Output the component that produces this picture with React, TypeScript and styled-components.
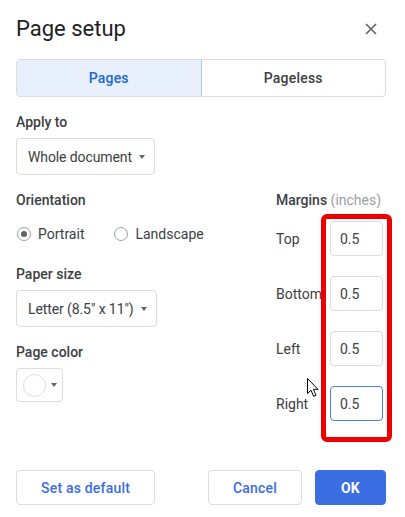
import styled, { createGlobalStyle, css } from 'styled-components';

const GlobalStyle = createGlobalStyle`
  html, body {
    margin: 0;
    padding: 0;
    background: #ffffff;
  }
  body {
    font-family: Roboto, "Liberation Sans", Arial, sans-serif;
    color: #3c4043;
    -webkit-font-smoothing: antialiased;
  }
  * {
    box-sizing: border-box;
  }
`;

const margins = [
  { label: 'Top', value: '0.5' },
  { label: 'Bottom', value: '0.5' },
  { label: 'Left', value: '0.5' },
  { label: 'Right', value: '0.5', focused: true },
];

function App() {
  return (
    <>
      <GlobalStyle />
      <Dialog>
        <Header>
          <Title>Page setup</Title>
          <CloseButton aria-label="Close">
            <svg width="12" height="12" viewBox="0 0 12 12">
              <path d="M1 1 L11 11 M11 1 L1 11" stroke="#5f6368" strokeWidth="1.6" />
            </svg>
          </CloseButton>
        </Header>

        <Tabs>
          <Tab $active>Pages</Tab>
          <Tab>Pageless</Tab>
        </Tabs>

        <Section>
          <Label>Apply to</Label>
          <Select>
            Whole document
            <Caret />
          </Select>
        </Section>

        <Columns>
          <LeftColumn>
            <Label>Orientation</Label>
            <RadioRow>
              <RadioOption>
                <Radio $checked />
                Portrait
              </RadioOption>
              <RadioOption>
                <Radio />
                Landscape
              </RadioOption>
            </RadioRow>

            <Label $top={20}>Paper size</Label>
            <Select>
              Letter (8.5" x 11")
              <Caret />
            </Select>

            <Label $top={15}>Page color</Label>
            <ColorButton>
              <Swatch />
              <Caret />
            </ColorButton>
          </LeftColumn>

          <RightColumn>
            <Label>
              Margins <Muted>(inches)</Muted>
            </Label>
            <MarginList>
              {margins.map((m) => (
                <MarginRow key={m.label}>
                  <MarginLabel>{m.label}</MarginLabel>
                  <MarginInput $focused={m.focused}>{m.value}</MarginInput>
                </MarginRow>
              ))}
            </MarginList>
            <Highlight />
            <Cursor width="13" height="20" viewBox="0 0 13 20">
              <path
                d="M0.5 0.5 L0.5 15.5 L4 12.2 L6.6 18.3 L9 17.3 L6.4 11.3 L11 11.3 Z"
                fill="#ffffff"
                stroke="#000000"
                strokeWidth="1"
                strokeLinejoin="round"
              />
            </Cursor>
          </RightColumn>
        </Columns>

        <Footer>
          <Button>Set as default</Button>
          <FooterRight>
            <Button>Cancel</Button>
            <Button $primary>OK</Button>
          </FooterRight>
        </Footer>
      </Dialog>
    </>
  );
}

const Dialog = styled.div`
  width: 405px;
  height: 517px;
  padding: 15px 19px 0 16px;
  display: flex;
  flex-direction: column;
  background: #ffffff;
`;

const Header = styled.div`
  display: flex;
  align-items: center;
  justify-content: space-between;
  height: 28px;
`;

const Title = styled.h1`
  margin: 0;
  font-size: 22px;
  line-height: 28px;
  font-weight: 400;
  color: #202124;
`;

const CloseButton = styled.button`
  display: flex;
  align-items: center;
  justify-content: center;
  width: 24px;
  height: 24px;
  margin-right: 3px;
  padding: 0;
  border: none;
  background: none;
`;

const Tabs = styled.div`
  display: flex;
  margin-top: 16px;
  height: 38px;
  border: 1px solid #dadce0;
  border-radius: 4px;
  overflow: hidden;
`;

const Tab = styled.div<{ $active?: boolean }>`
  flex: 1;
  display: flex;
  align-items: center;
  justify-content: center;
  font-size: 14px;
  font-weight: 500;
  letter-spacing: 0.2px;
  color: #3c4043;
  ${({ $active }) =>
    $active &&
    css`
      background: #e8f0fe;
      color: #1a67d2;
      border-right: 1px solid #aecbfa;
    `}
`;

const Section = styled.div`
  display: flex;
  flex-direction: column;
  align-items: flex-start;
  margin-top: 15px;
`;

const Label = styled.div<{ $top?: number }>`
  font-size: 14px;
  line-height: 20px;
  font-weight: 500;
  color: #3c4043;
  margin-top: ${({ $top }) => $top ?? 0}px;
  margin-bottom: 6px;
`;

const Muted = styled.span`
  font-weight: 400;
  color: #9aa0a6;
`;

const Select = styled.div`
  display: inline-flex;
  align-items: center;
  gap: 7px;
  height: 37px;
  padding: 0 9px 0 11px;
  border: 1px solid #dadce0;
  border-radius: 4px;
  font-size: 14px;
  letter-spacing: -0.1px;
  color: #3c4043;
`;

const Caret = styled.span`
  width: 0;
  height: 0;
  border-left: 3.5px solid transparent;
  border-right: 3.5px solid transparent;
  border-top: 4px solid #5f6368;
`;

const Columns = styled.div`
  display: grid;
  grid-template-columns: 1fr 110px;
  margin-top: 15px;
`;

const LeftColumn = styled.div`
  display: flex;
  flex-direction: column;
  align-items: flex-start;
`;

const RadioRow = styled.div`
  display: flex;
  gap: 30px;
  margin-top: 8px;
  margin-left: 1px;
`;

const RadioOption = styled.label`
  display: flex;
  align-items: center;
  gap: 7px;
  height: 20px;
  font-size: 14px;
  color: #3c4043;
`;

const Radio = styled.span<{ $checked?: boolean }>`
  position: relative;
  width: 14px;
  height: 14px;
  border: 1px solid #9aa0a6;
  border-radius: 50%;
  ${({ $checked }) =>
    $checked &&
    css`
      &::after {
        content: '';
        position: absolute;
        inset: 3px;
        border-radius: 50%;
        background: #5f6368;
      }
    `}
`;

const ColorButton = styled.div`
  display: flex;
  align-items: center;
  gap: 5px;
  width: 47px;
  height: 34px;
  padding-left: 6px;
  border: 1px solid #dadce0;
  border-radius: 4px;
`;

const Swatch = styled.span`
  width: 23px;
  height: 23px;
  border: 1px solid #dadce0;
  border-radius: 50%;
  background: #ffffff;
`;

const RightColumn = styled.div`
  position: relative;
  display: flex;
  flex-direction: column;
`;

const MarginList = styled.div`
  display: flex;
  flex-direction: column;
  gap: 20px;
  margin-top: 5px;
`;

const MarginRow = styled.div`
  display: flex;
  align-items: center;
  white-space: nowrap;
`;

const MarginLabel = styled.span`
  width: 54px;
  font-size: 14px;
  color: #3c4043;
`;

const MarginInput = styled.div<{ $focused?: boolean }>`
  display: flex;
  align-items: center;
  width: 53px;
  height: 35px;
  padding-left: 9px;
  border: 1px solid ${({ $focused }) => ($focused ? '#4a7fe8' : '#dadce0')};
  border-radius: 4px;
  font-size: 14px;
  color: #3c4043;
  background: #ffffff;
`;

const Highlight = styled.div`
  position: absolute;
  left: 45px;
  top: 24px;
  width: 71px;
  height: 228px;
  border: 5px solid #ee0000;
  border-radius: 6px;
  pointer-events: none;
`;

const Cursor = styled.svg`
  position: absolute;
  left: 31px;
  top: 188px;
`;

const Footer = styled.div`
  display: flex;
  justify-content: space-between;
  margin-top: 49px;
`;

const FooterRight = styled.div`
  display: flex;
  gap: 13px;
`;

const Button = styled.button<{ $primary?: boolean }>`
  height: 35px;
  min-width: 71px;
  padding: 0 24px;
  border: 1px solid #dadce0;
  border-radius: 4px;
  background: #ffffff;
  font-family: inherit;
  font-size: 14px;
  font-weight: 500;
  letter-spacing: 0.2px;
  color: #3b6de3;
  ${({ $primary }) =>
    $primary &&
    css`
      border-color: #3b6de3;
      background: #3b6de3;
      color: #ffffff;
      font-weight: 700;
    `}
`;

export default App;
